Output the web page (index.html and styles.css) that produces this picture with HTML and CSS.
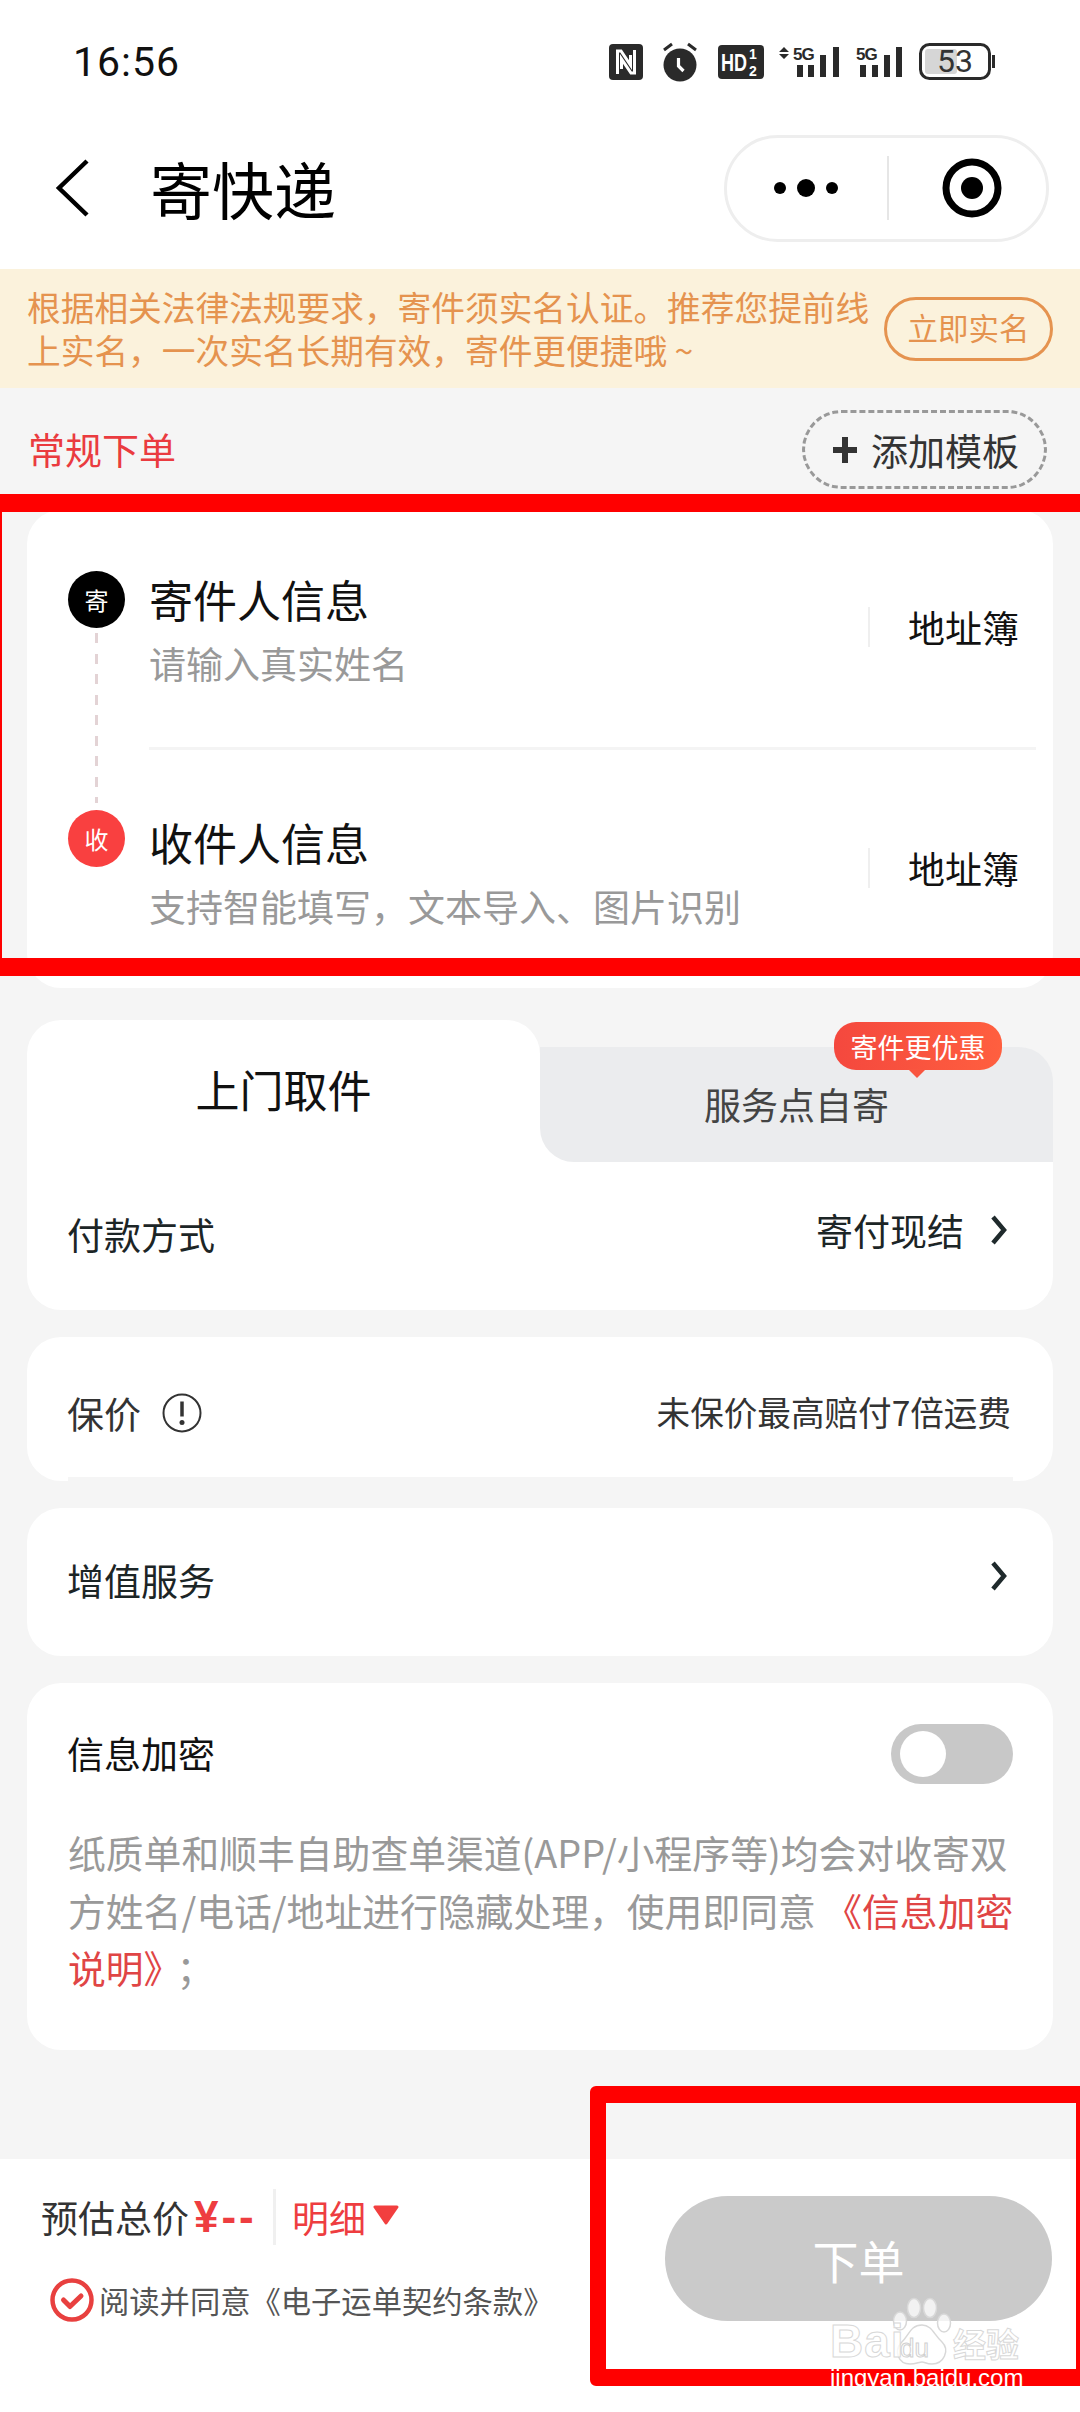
FILE: index.html
```html
<!DOCTYPE html>
<html lang="zh-CN">
<head>
<meta charset="utf-8">
<title>寄快递</title>
<link rel="stylesheet" href="styles.css">
</head>
<body>
<div class="page">
  <header class="chrome">
    <div class="status">
      <span class="time">16:56</span>
      <div class="status-icons">
        <svg class="ic-nfc" width="34" height="36" viewBox="0 0 34 36"><rect width="34" height="36" rx="4" fill="#2a2a2a"/><path d="M8.500 30V7h3.500l9.500 14V11M25.500 6v23H22L12.500 15v10" fill="none" stroke="#fff" stroke-width="3"/></svg>
        <svg class="ic-alarm" width="36" height="40" viewBox="0 0 36 40"><circle cx="18" cy="23" r="16.500" fill="#2a2a2a"/><path d="M2 8l8-6M34 8l-8-6" stroke="#2a2a2a" stroke-width="3" fill="none"/><path d="M16.500 16v8l5 5" stroke="#fff" stroke-width="3.200" fill="none"/></svg>
        <svg class="ic-hd" width="46" height="34" viewBox="0 0 46 34"><rect width="46" height="34" rx="4" fill="#2a2a2a"/><text transform="translate(3 26) scale(.75 1)" class="hd-t">HD</text><text x="31" y="14" class="hd-s">1</text><text x="31" y="31" class="hd-s">2</text></svg>
        <svg class="ic-sig1" width="60" height="34" viewBox="0 0 60 34"><path d="M5 2l5 5H0zM5 14l5-5H0z" fill="#2a2a2a"/><text x="14" y="15" class="sig-t">5G</text><path d="M18 20h6v12h-6zM29 20h6v12h-6zM41 10h6v22h-6zM54 2h6v30h-6z" fill="#2a2a2a"/></svg>
        <svg class="ic-sig2" width="46" height="34" viewBox="0 0 46 34"><text x="0" y="15" class="sig-t">5G</text><path d="M4 20h6v12H4zM16 20h6v12h-6zM28 10h6v22h-6zM40 2h6v30h-6z" fill="#2a2a2a"/></svg>
        <svg class="ic-bat" width="76" height="38" viewBox="0 0 76 38"><rect x="1.500" y="1.500" width="69" height="34" rx="9" fill="#fff" stroke="#2a2a2a" stroke-width="3"/><rect x="6" y="6" width="32" height="25" rx="3" fill="#d6d6d6"/><text x="36" y="29" class="bat-t">53</text><rect x="73" y="12" width="3" height="13" fill="#2a2a2a"/></svg>
      </div>
    </div>
    <div class="nav">
      <svg class="back" width="36" height="58" viewBox="0 0 36 58"><path d="M33 2L5 29l28 27" fill="none" stroke="#000" stroke-width="4.500"/></svg>
      <h1 class="title">寄快递</h1>
      <div class="capsule">
        <svg class="dots" width="64" height="20" viewBox="0 0 64 20"><circle cx="6" cy="10" r="6" fill="#000"/><circle cx="32" cy="10" r="9" fill="#000"/><circle cx="58" cy="10" r="6" fill="#000"/></svg>
        <span class="capsule-div"></span>
        <svg class="target" width="60" height="60" viewBox="0 0 60 60"><circle cx="30" cy="30" r="26" fill="none" stroke="#000" stroke-width="7"/><circle cx="30" cy="30" r="11" fill="#000"/></svg>
      </div>
    </div>
  </header>

  <div class="notice">
    <p class="notice-text">根据相关法律法规要求，寄件须实名认证。推荐您提前线<br>上实名，一次实名长期有效，寄件更便捷哦 ~</p>
    <span class="notice-btn">立即实名</span>
  </div>

  <main class="main">
    <div class="mode-row">
      <span class="mode">常规下单</span>
      <span class="tpl"><svg width="28" height="30" viewBox="0 0 28 30"><path d="M14 2v26M2 15h24" stroke="#333" stroke-width="6"/></svg>添加模板</span>
    </div>

    <section class="card contacts">
      <div class="rail">
        <span class="dot dot-black">寄</span>
        <span class="dash"></span>
        <span class="dot dot-red">收</span>
      </div>
      <div class="people">
        <div class="person person-a">
          <div class="person-info">
            <div class="person-name">寄件人信息</div>
            <div class="person-sub">请输入真实姓名</div>
          </div>
          <div class="book">地址簿</div>
        </div>
        <div class="person person-b">
          <div class="person-info">
            <div class="person-name">收件人信息</div>
            <div class="person-sub">支持智能填写，文本导入、图片识别</div>
          </div>
          <div class="book">地址簿</div>
        </div>
      </div>
    </section>

    <section class="pickup">
      <div class="tabs">
        <div class="tab tab-on">上门取件</div>
        <div class="tab tab-off">服务点自寄
          <span class="bubble">寄件更优惠</span>
        </div>
      </div>
      <div class="pay-row">
        <span class="label">付款方式</span>
        <span class="pay-val">寄付现结<svg class="chev" width="18" height="30" viewBox="0 0 18 30"><path d="M3 2l11 13L3 28" fill="none" stroke="#1f2a2c" stroke-width="4.500"/></svg></span>
      </div>
    </section>

    <section class="card insure">
      <span class="label label-gray">保价<svg class="info" width="40" height="40" viewBox="0 0 40 40"><circle cx="20" cy="20" r="18.500" fill="none" stroke="#333" stroke-width="2"/><path d="M20 8.500v15" stroke="#333" stroke-width="3.500"/><circle cx="20" cy="29.500" r="2.500" fill="#333"/></svg></span>
      <span class="insure-val">未保价最高赔付7倍运费</span>
    </section>

    <section class="card extra">
      <span class="label">增值服务</span>
      <svg class="chev chev-up" width="18" height="30" viewBox="0 0 18 30"><path d="M3 2l11 13L3 28" fill="none" stroke="#1f2a2c" stroke-width="4.500"/></svg>
    </section>

    <section class="card secure">
      <div class="secure-head">
        <span class="label label-black">信息加密</span>
        <span class="toggle"><span class="knob"></span></span>
      </div>
      <p class="secure-text">纸质单和顺丰自助查单渠道(APP/小程序等)均会对收寄双<br>方姓名/电话/地址进行隐藏处理，使用即同意 <a class="link">《信息加密<br>说明》</a><span class="semi">；</span></p>
    </section>
  </main>

  <footer class="footer">
    <div class="foot-left">
      <div class="price-row">
        <span class="price-label">预估总价</span>
        <span class="price">¥--</span>
        <span class="price-div"></span>
        <span class="detail">明细</span>
        <svg class="tri" width="28" height="20" viewBox="0 0 28 20"><path d="M3 2h22L14 18z" fill="#f23f3f" stroke="#f23f3f" stroke-width="3" stroke-linejoin="round"/></svg>
      </div>
      <div class="agree">
        <svg width="44" height="44" viewBox="0 0 44 44"><circle cx="22" cy="22" r="19.500" fill="none" stroke="#e8403f" stroke-width="4.500"/><path d="M13.500 22l6.500 6.500L31 18" fill="none" stroke="#e8403f" stroke-width="5" stroke-linecap="round" stroke-linejoin="round"/></svg>
        <span>阅读并同意《电子运单契约条款》</span>
      </div>
    </div>
    <div class="submit">下单</div>
  </footer>

  <div class="mark mark-a"></div>
  <div class="mark mark-b"></div>

  <div class="wm">
    <svg class="wm-paw" width="60" height="76" viewBox="0 0 60 76"><g fill="#fff" fill-opacity=".75" stroke="#d8d8d8" stroke-width="1.500"><ellipse cx="8" cy="24" rx="6.500" ry="9"/><ellipse cx="22" cy="11" rx="6.500" ry="9.500"/><ellipse cx="38" cy="11" rx="6.500" ry="9.500"/><ellipse cx="52" cy="26" rx="6.500" ry="9"/><path d="M30 28c10 0 12 10 20 17 8 8 2 22-10 22-6 0-7-2-10-2s-6 2-12 2C6 67 2 54 9 46c8-7 9-18 21-18z"/></g></svg>
    <div class="wm-logo"><span class="wm-bai">Bai</span><span class="wm-du">du</span><span class="wm-cn">经验</span></div>
    <div class="wm-url">jingyan.baidu.com</div>
  </div>
</div>
</body>
</html>
```

FILE: styles.css
```css
* { box-sizing: border-box; margin: 0; padding: 0; }
html, body { width: 1080px; height: 2412px; overflow: hidden; background: #f5f5f5; }
body { font-family: "Noto Sans CJK SC", "Noto Sans", sans-serif; color: #1c2526; }

.page { position: relative; width: 1080px; height: 2412px; display: flex; flex-direction: column; background: #f5f5f5; }

/* top */
.chrome { height: 269px; background: #fff; flex: none; }
.status { height: 124px; display: flex; align-items: center; justify-content: space-between; padding: 0 85px 0 73px; }
.time { font-family: Roboto, sans-serif; font-size: 41px; color: #111; letter-spacing: 1px; }
.status-icons { display: flex; align-items: center; }
.ic-nfc { margin-right: 19px; }
.ic-alarm { margin-right: 20px; }
.ic-hd { margin-right: 15px; }
.ic-sig1 { margin-right: 17px; }
.ic-sig2 { margin-right: 17px; }
.hd-t { font-family: "Liberation Sans", sans-serif; font-weight: 700; font-size: 24px; fill: #fff; }
.hd-s { font-family: "Liberation Sans", sans-serif; font-weight: 700; font-size: 14px; fill: #fff; }
.sig-t { font-family: "Liberation Sans", sans-serif; font-weight: 700; font-size: 17px; fill: #2a2a2a; letter-spacing: -1px; }
.bat-t { font-family: Roboto, sans-serif; font-size: 32px; fill: #333; text-anchor: middle; }

.nav { display: flex; align-items: center; height: 128px; padding: 0 31px 0 54px; }
.back { flex: none; }
.title { font-size: 62px; font-weight: 400; color: #000; margin-left: 60px; flex: 1; line-height: 1; }
.capsule { width: 325px; height: 107px; border: 3px solid #eee; border-radius: 54px; display: flex; align-items: center; padding-left: 47px; background: #fff; }
.capsule-div { width: 2px; height: 64px; background: #e6e6e6; margin-left: 49px; }
.target { margin-left: 53px; }

.notice { flex: none; height: 119px; background: #fbf2dc; display: flex; align-items: center; padding: 0 27px 0 27px; }
.notice-text { width: 857px; font-size: 33.700px; line-height: 43px; color: #e5934f; white-space: nowrap; padding-bottom: 2px; }
.notice-btn { width: 169px; height: 64px; border: 3px solid #e5934f; border-radius: 32px; color: #e5934f; font-size: 30.500px; padding-bottom: 3px; display: flex; align-items: center; justify-content: center; }

.main { flex: 1; padding: 0 27px; display: flex; flex-direction: column; }

.mode-row { height: 122px; display: flex; align-items: center; justify-content: space-between; }
.mode { font-size: 37px; color: #ea3b3f; margin-left: 1px; }
.tpl { width: 245px; height: 79px; margin-top: 1px; margin-right: 6px; border: 3px dashed #999; border-radius: 40px; display: flex; align-items: center; padding-left: 26px; gap: 12px; font-size: 37px; color: #333; }

.card { background: #fff; border-radius: 34px; }

.contacts { height: 478px; padding: 61px 17px 0 41px; display: flex; }
.rail { width: 57px; height: 296px; flex: none; display: flex; flex-direction: column; align-items: center; }
.dot { width: 57px; height: 57px; border-radius: 50%; color: #fff; font-size: 24px; display: flex; align-items: center; justify-content: center; flex: none; }
.dot-black { background: #000; }
.dot-red { background: #f94040; }
.dash { flex: 1; width: 3px; margin: 5px 0 7px; background: repeating-linear-gradient(#e3d3d5 0 10px, transparent 10px 20.500px); }
.people { flex: 1; margin-left: 24px; }
.person { display: flex; align-items: center; justify-content: space-between; }
.person-a { padding: 3px 0 59px; border-bottom: 3px solid #f4f4f4; }
.person-a .book { margin-bottom: 8px; }
.person-b { padding-top: 67px; }
.person-name { font-size: 44px; line-height: 50px; color: #111; }
.person-sub { font-size: 37px; line-height: 50px; margin-top: 14px; color: #999; white-space: nowrap; }
.book { width: 168px; height: 40px; margin-bottom: 12px; border-left: 2px solid #efefef; padding-left: 38px; font-size: 37px; line-height: 40px; color: #111; white-space: nowrap; }

.pickup { margin-top: 32px; height: 290px; flex: none; }
.tabs { height: 142px; display: flex; background: linear-gradient(#fff, #fff) left bottom / 600px 60px no-repeat; }
.tab { width: 513px; display: flex; align-items: center; justify-content: center; }
.tab-on { background: #fff; border-radius: 34px 34px 0 0; font-size: 44px; color: #111; height: 142px; padding-bottom: 4px; }
.tab-off { position: relative; margin-top: 27px; height: 115px; background: #ebecee; border-radius: 0 34px 0 34px; font-size: 37px; color: #444; padding-bottom: 2px; }
.bubble { position: absolute; left: 294px; top: -25px; width: 168px; height: 48px; border-radius: 22px; background: linear-gradient(90deg, #f4483e, #ff5f3f); color: #fff; font-size: 27px; display: flex; align-items: center; justify-content: center; }
.bubble::after { content: ""; position: absolute; left: 74px; bottom: -8px; border: 9px solid transparent; border-bottom: 0; border-top-color: #f9553f; }
.pay-row { height: 148px; background: #fff; border-radius: 0 0 34px 34px; display: flex; align-items: center; justify-content: space-between; padding: 0 45px 5px 40px; }
.label { font-size: 37px; color: #1c2526; display: flex; align-items: center; }
.label-gray { color: #333; }
.label-black { color: #111; margin-bottom: 3px; }
.pay-val { font-size: 37px; display: flex; align-items: center; margin-bottom: 7px; gap: 26px; }
.chev { flex: none; }

.insure { margin-top: 27px; height: 144px; flex: none; display: flex; align-items: center; justify-content: space-between; padding: 7px 42px 0 40px; position: relative; overflow: hidden; }
.insure::after { content: ""; position: absolute; left: 41px; right: 40px; bottom: 0; height: 4px; background: #f5f5f5; }
.info { margin-left: 21px; }
.insure-val { font-size: 33.600px; color: #333; white-space: nowrap; margin-bottom: 2px; }

.extra { margin-top: 27px; height: 148px; flex: none; display: flex; align-items: center; justify-content: space-between; padding: 0 45px 5px 40px; }
.chev-up { margin-bottom: 8px; }

.secure { margin-top: 27px; height: 367px; flex: none; padding: 41px 40px 0 40px; }
.secure-head { display: flex; align-items: center; justify-content: space-between; height: 60px; }
.toggle { width: 122px; height: 60px; border-radius: 30px; background: #c8c8c8; padding: 7px 9px; display: block; }
.knob { display: block; width: 46px; height: 46px; border-radius: 50%; background: #fff; }
.secure-text { margin-top: 39px; font-size: 37.800px; line-height: 57.500px; color: #999; white-space: nowrap; padding-left: 1px; }
.link { color: #e04545; }
.semi { margin-left: 14px; }

/* footer */
.footer { flex: none; height: 253px; background: #fff; display: flex; justify-content: space-between; align-items: flex-start; padding: 0 28px 0 41px; }
.foot-left { padding-top: 30px; }
.price-row { display: flex; align-items: center; height: 56px; font-size: 37px; color: #333; }
.price { color: #ee3d40; font-weight: 700; font-family: "Liberation Sans", sans-serif; margin-left: 5px; width: 79px; white-space: nowrap; font-size: 44px; letter-spacing: 3px; line-height: 56px; }
.price-div { width: 3px; height: 56px; background: #f0f0f0; }
.detail { color: #ee3d40; margin-left: 16px; }
.tri { margin-left: 6px; margin-bottom: 4px; }
.agree { display: flex; align-items: center; gap: 5px; margin-top: 33px; margin-left: 9px; font-size: 30.300px; color: #555; white-space: nowrap; }
.submit { margin-top: 37px; width: 387px; height: 125px; border-radius: 63px; background: #cacaca; color: #fff; font-size: 46px; display: flex; align-items: center; justify-content: center; }

/* red annotation frames */
.mark { position: absolute; pointer-events: none; border-style: solid; border-color: #f00; }
.mark-a { left: 0; top: 494px; width: 1080px; height: 482px; border-width: 18px 0 18px 2px; }
.mark-b { left: 590px; top: 2086px; width: 490px; height: 300px; border-width: 17px 4px 17px 16px; border-radius: 6px 0 0 6px; }

/* watermark */
.wm { position: absolute; left: 830px; top: 2297px; width: 200px; height: 100px; font-family: "Liberation Sans", sans-serif; }
.wm-paw { position: absolute; left: 62px; top: 0; }
.wm-logo { position: absolute; left: 0; top: 24px; height: 40px; display: flex; align-items: baseline; white-space: nowrap; line-height: 40px; }
.wm-bai { font-size: 46px; font-weight: 700; color: rgba(255,255,255,.8); -webkit-text-stroke: 1px #d8d8d8; width: 70px; letter-spacing: 1px; }
.wm-du { font-size: 26px; color: rgba(255,255,255,.8); -webkit-text-stroke: 1px #d0d0d0; width: 53px; }
.wm-cn { font-family: "Noto Sans CJK SC", sans-serif; font-size: 33px; font-weight: 700; color: rgba(255,255,255,.8); -webkit-text-stroke: 1px #d8d8d8; }
.wm-url { position: absolute; left: 0; top: 67px; font-size: 24px; line-height: 28px; color: #fff; white-space: nowrap; }
```
